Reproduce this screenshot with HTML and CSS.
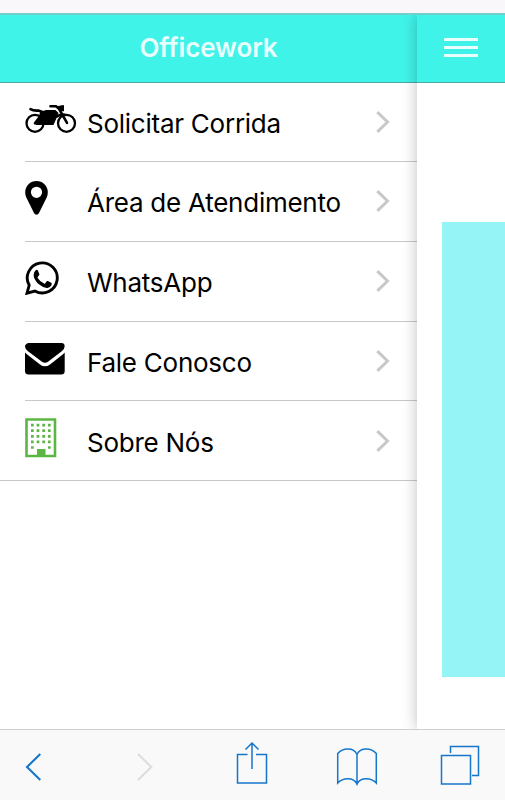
FILE: index.html
```html
<!DOCTYPE html>
<html lang="pt-BR">
<head>
    <meta charset="UTF-8">
    <meta name="viewport" content="width=device-width, initial-scale=1.0">
    <title>Officework</title>
    <link rel="stylesheet" href="styles.css">
</head>
<body>
    <div class="status-bar"></div>

    <div class="views">
        <div class="side-panel">
            <header class="navbar">
                <h1>Officework</h1>
            </header>
            <ul class="menu">
                <li class="menu-item">
                    <a href="#">
                        <svg class="icon" width="52" height="30" viewBox="0 0 52 30">
                            <g fill="none" stroke="#000" stroke-width="2.3" stroke-linecap="round">
                                <circle cx="10" cy="19.300" r="8.500"/>
                                <circle cx="41.500" cy="19.300" r="8.500"/>
                                <path d="M5.500 5.200q3 1.800 8 1.400l4 1.400M25.500 2.300h5.500l3 2.500 8 14M10 19.300l6-8M32 12.500q3.500-2.500 8-1.800" stroke-width="2.600"/>
                            </g>
                            <path d="M15 8l6-2h9.500l3 3-1.500 4-3.500 8H10.500l3.500-8z"/>
                            <path d="M33 2.500l5.500-1v5.500l-4.500-1z" stroke="#000" stroke-linejoin="round"/>
                        </svg>
                        <span class="label">Solicitar Corrida</span>
                        <svg class="chevron" width="14" height="22" viewBox="0 0 14 22"><path d="M1.300 1.200L11.500 11 1.300 20.800"/></svg>
                    </a>
                </li>
                <li class="menu-item">
                    <a href="#">
                        <svg class="icon" width="24" height="34" viewBox="0 0 24 34">
                            <path fill-rule="evenodd" d="M11.500 0A11.300 11.300 0 0 1 22.800 11.300q0 2.700-1 5L14 32q-.8 1.700-2.500 1.700T9 32L1.200 16.300q-1-2.300-1-5A11.300 11.300 0 0 1 11.500 0zm0 5.700a5.600 5.600 0 1 0 0 11.200 5.600 5.600 0 0 0 0-11.200z"/>
                        </svg>
                        <span class="label">Área de Atendimento</span>
                        <svg class="chevron" width="14" height="22" viewBox="0 0 14 22"><path d="M1.300 1.200L11.500 11 1.300 20.800"/></svg>
                    </a>
                </li>
                <li class="menu-item">
                    <a href="#">
                        <svg class="icon" width="34" height="34" viewBox="0 0 34 34">
                            <path d="M2 32.200l2.200-7.900A15 15 0 1 1 9.900 30z" fill="none" stroke="#000" stroke-width="2.900"/>
                            <path d="M11.900 8.800q.7 0 1 .8l1.400 3.400q.2.500-.1 1l-1.500 2q-.3.500 0 1 2.300 3.900 6.400 5.600.6.300 1-.2l1.700-2.100q.4-.5 1-.2l3.400 1.700q.7.300.6 1c-.3 2.900-2.400 4-4.500 4.100-2.200 0-7.500-2.100-10.700-6C9.200 18 8.600 15.500 8.700 14c0-2 .7-3.400 1.800-4.600q.6-.6 1.400-.6z"/>
                        </svg>
                        <span class="label">WhatsApp</span>
                        <svg class="chevron" width="14" height="22" viewBox="0 0 14 22"><path d="M1.300 1.200L11.500 11 1.300 20.800"/></svg>
                    </a>
                </li>
                <li class="menu-item">
                    <a href="#">
                        <svg class="icon mail" width="40" height="32" viewBox="0 0 40 32">
                            <path d="M3.500 0h33Q39.500 0 39.700 3q0 3-3 5.300L23 18.700q-3 2.300-6 0L3 8.300Q0 6 0 3.500T3.500 0z"/>
                            <path d="M0 9.500q1 1.200 2.200 2L15 21.500q5 3.700 10 0l12.700-10q1.200-.8 2-1.900V28q0 3.500-3.500 3.500H3.500Q0 31.500 0 28z"/>
                        </svg>
                        <span class="label">Fale Conosco</span>
                        <svg class="chevron" width="14" height="22" viewBox="0 0 14 22"><path d="M1.300 1.200L11.500 11 1.300 20.800"/></svg>
                    </a>
                </li>
                <li class="menu-item">
                    <a href="#">
                        <svg class="icon building" width="32" height="40" viewBox="0 0 32 40">
                            <path d="M1.500 1.500h28.500v36.500H1.500z" fill="none" stroke-width="2.600"/>
                            <path d="M12 31h8.500v8H12z"/>
                            <path class="windows" d="M6 7.200h20M6 12.700h20M6 18.300h20M6 23.900h20" stroke-dasharray="2.700 2.950"/>
                            <path class="windows" d="M6 29.500h2.700M22.950 29.500h2.700"/>
                        </svg>
                        <span class="label">Sobre Nós</span>
                        <svg class="chevron" width="14" height="22" viewBox="0 0 14 22"><path d="M1.300 1.200L11.500 11 1.300 20.800"/></svg>
                    </a>
                </li>
            </ul>
        </div>

        <div class="main-view">
            <div class="navbar">
                <div class="hamburger"><i></i><i></i><i></i></div>
            </div>
            <div class="content"></div>
        </div>
    </div>

    <nav class="toolbar">
        <svg width="18" height="30" viewBox="0 0 18 30"><path d="M15.300 2L2 15l13.300 13" stroke-width="2.100"/></svg>
        <svg class="disabled" width="18" height="30" viewBox="0 0 18 30"><path d="M2 2l13.300 13L2 28" stroke-width="2"/></svg>
        <svg class="share" width="32" height="44" viewBox="0 0 32 44"><path d="M11.500 13.500H1.500v28.500h29v-28.500h-10.500M16 28V2.500M9.500 8.500L16 2l6.500 6.500"/></svg>
        <svg class="book" width="42" height="40" viewBox="0 0 42 40"><path d="M21 7.500v30M21 7.500Q18.500 2 12 2T1.700 6.500V36q4-4.300 10-4.300 7 0 9.300 5.500Q23.300 31.700 30.300 31.700q6 0 10 4.300V6.500Q36.500 2 30 2t-9 5.500z"/></svg>
        <svg class="tabs" width="40" height="40" viewBox="0 0 40 40"><path d="M1.500 10.500h29v28.500h-29zM10.500 8V1.500h28v29H32"/></svg>
    </nav>
</body>
</html>
```

FILE: styles.css
```css
* {
    margin: 0;
    padding: 0;
    box-sizing: border-box;
}

body {
    display: flex;
    flex-direction: column;
    height: 800px;
    background-color: #fff;
    color: #000;
    font-family: Inter, "Liberation Sans", sans-serif;
    overflow: hidden;
}

.status-bar {
    height: 15px;
    background-color: #f9f7f9;
    border-bottom: 2px solid #70cfca;
}

.views {
    display: flex;
    flex: 1;
}

.side-panel {
    width: 417px;
    background-color: #fff;
}

.navbar {
    display: flex;
    align-items: center;
    justify-content: center;
    height: 68px;
    background-color: #40f3e9;
    border-bottom: 1px solid #48aaa5;
}

.navbar h1 {
    font-size: 26px;
    font-weight: 600;
    letter-spacing: -0.1px;
    line-height: 32px;
    color: #e9fffe;
    padding-bottom: 2px;
}

/* menu */
.menu {
    list-style: none;
    border-bottom: 1px solid #c8c7cc;
}

.menu-item {
    padding-left: 25px;
}

.menu-item a {
    display: grid;
    grid-template-columns: 62px 1fr 14px;
    align-items: center;
    height: 79.75px;
    padding-right: 27px;
    border-bottom: 1px solid #c8c7cc;
    color: inherit;
    text-decoration: none;
}

.menu-item:first-child a {
    height: 79px;
}

.menu-item:last-child a {
    height: 78.75px;
    border-bottom: none;
}

.icon {
    margin-bottom: 6px;
}

.mail {
    margin-bottom: 4px;
}

.building {
    fill: #5cb644;
    stroke: #5cb644;
    stroke-width: 0;
}

.building .windows {
    fill: none;
    stroke-width: 2.7px;
}

.label {
    font-size: 26px;
    line-height: 32px;
    letter-spacing: -0.25px;
    white-space: nowrap;
    padding-top: 4px;
}

.chevron {
    fill: none;
    stroke: #c7c7cc;
    stroke-width: 3px;
}

/* page pushed to the right by the open panel */
.main-view {
    flex: 1;
    box-shadow: 0 0 14px rgba(0, 0, 0, 0.25);
    clip-path: inset(0 0 0 -20px);
    background-color: #fff;
}

.main-view .navbar {
    justify-content: flex-start;
    padding-left: 27px;
    padding-bottom: 2px;
}

.hamburger {
    display: flex;
    flex-direction: column;
    gap: 5px;
    width: 34px;
}

.hamburger i {
    height: 3px;
    background-color: #e9fffe;
}

.content {
    height: 455px;
    margin: 139px 0 0 25px;
    background-color: #95f4f6;
}

/* browser toolbar */
.toolbar {
    display: grid;
    grid-template-columns: 111px 100px 100px 104px 40px;
    align-items: center;
    height: 71px;
    padding: 3px 25px 0;
    background-color: #f9f9f9;
    border-top: 1px solid #cfcfd1;
}

.toolbar svg {
    fill: none;
    stroke: #1576cc;
    stroke-width: 1.5px;
}

.toolbar .disabled {
    stroke: #dcdcdc;
}

.toolbar .share {
    margin-bottom: 7px;
}

.toolbar .tabs {
    margin-bottom: 4px;
}
```
